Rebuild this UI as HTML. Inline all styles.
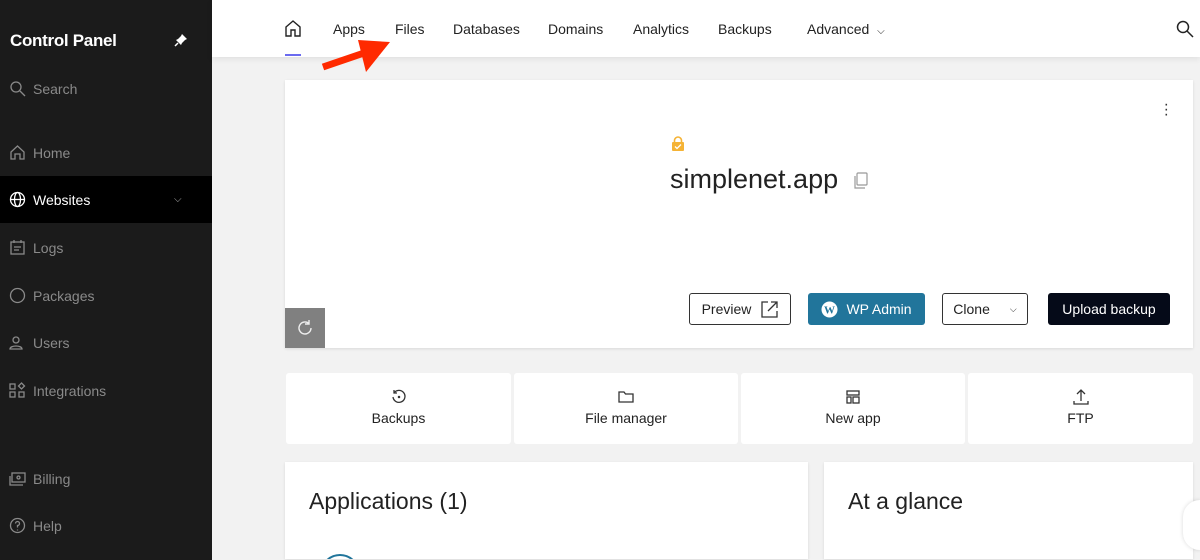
<!DOCTYPE html>
<html style="height:560px;overflow:hidden"><head><meta charset="utf-8"><style>
*{box-sizing:border-box;margin:0;padding:0}
body{width:1200px;height:560px;overflow:hidden;background:#f2f2f2;font-family:"Liberation Sans",sans-serif;position:relative}
.sb{position:absolute;left:0;top:0;width:212px;height:560px;background:#1b1b1b;color:#8a8a8a}
.sb .t{position:absolute;left:10px;top:31px;color:#fff;font-weight:bold;font-size:17px;letter-spacing:-0.3px}
.it{position:absolute;left:0;width:212px;height:47px;display:flex;align-items:center;padding-left:9px;font-size:14px}
.it svg{width:17px;height:17px;margin-right:7px;stroke:#8a8a8a;fill:none;stroke-width:1.3}
.it.on{background:#000;color:#fff}.it.on svg{stroke:#fff}
.top{position:absolute;left:212px;top:0;width:988px;height:57px;background:#fff;box-shadow:0 2px 6px rgba(0,0,0,.08)}
.nav{position:absolute;top:21px;font-size:14px;color:#222}
.card{position:absolute;background:#fff;box-shadow:0 1px 3px rgba(0,0,0,.1);overflow:hidden}
.btn{position:absolute;top:293px;height:32px;border-radius:3px;font-size:14px;display:flex;align-items:center;justify-content:center}
.tile{position:absolute;top:373px;height:71px;background:#fff;border-radius:3px;font-size:14px;color:#222;text-align:center}
.tile svg{display:block;margin:16px auto 5px;width:16px;height:16px;fill:none;stroke:#333;stroke-width:1.3}
</style></head><body>
<div class="sb">
<div class="t">Control Panel</div>
<svg style="position:absolute;left:174px;top:33px" width="14" height="14" viewBox="0 0 14 14"><path d="M8 1l5 5-2 1-3 3-1 2-5-5 2-1 3-3z" fill="#fff"/><path d="M4 10l-3 3" stroke="#fff" stroke-width="1.5"/></svg>
<div class="it" style="top:65px"><svg viewBox="0 0 17 17"><circle cx="7" cy="7" r="5"/><path d="M11 11l5 5"/></svg>Search</div>
<div class="it" style="top:129px"><svg viewBox="0 0 17 17"><path d="M2 8l6.5-6 6.5 6v7H11V10H6v5H2z"/></svg>Home</div>
<div class="it on" style="top:176px"><svg viewBox="0 0 17 17"><circle cx="8.5" cy="8.5" r="7"/><ellipse cx="8.5" cy="8.5" rx="3" ry="7"/><path d="M1.5 8.5h14"/></svg>Websites<span style="position:absolute;left:174px;font-size:10px;color:#aaa">⌵</span></div>
<div class="it" style="top:224px"><svg viewBox="0 0 17 17"><rect x="2" y="3" width="13" height="12"/><path d="M5 1v3M12 1v3M5 8h7M5 11h5"/></svg>Logs</div>
<div class="it" style="top:272px"><svg viewBox="0 0 17 17"><circle cx="8.5" cy="8.5" r="7"/></svg>Packages</div>
<div class="it" style="top:319px"><svg viewBox="0 0 17 17"><circle cx="7" cy="6" r="3"/><path d="M1 15c0-4 12-4 12 0z"/></svg>Users</div>
<div class="it" style="top:367px"><svg viewBox="0 0 17 17"><rect x="1" y="2" width="5" height="5"/><rect x="1" y="10" width="5" height="5"/><rect x="10" y="10" width="5" height="5"/><path d="M12.5 1l3 3-3 3-3-3z"/></svg>Integrations</div>
<div class="it" style="top:455px"><svg viewBox="0 0 17 17"><rect x="3" y="3" width="13" height="9"/><path d="M1 6v9h13"/><circle cx="9.5" cy="7.5" r="1.5"/></svg>Billing</div>
<div class="it" style="top:502px"><svg viewBox="0 0 17 17"><circle cx="8.5" cy="8.5" r="7"/><path d="M6.5 6.5a2 2 0 1 1 2 2v2M8.5 12.5v1"/></svg>Help</div>
</div>
<div class="top">
<svg style="position:absolute;left:73px;top:20px" width="16" height="17" viewBox="0 0 16 17" fill="none" stroke="#222" stroke-width="1.4"><path d="M1 7l7-6 7 6v9h-5v-6H6v6H1z"/></svg>
<div style="position:absolute;left:73px;top:54px;width:16px;height:2px;background:#6b6bf0"></div>
<span class="nav" style="left:121px">Apps</span><span class="nav" style="left:183px">Files</span><span class="nav" style="left:241px">Databases</span><span class="nav" style="left:336px">Domains</span><span class="nav" style="left:421px">Analytics</span><span class="nav" style="left:506px">Backups</span><span class="nav" style="left:595px">Advanced <span style="font-size:10px;margin-left:4px">⌵</span></span>
<svg style="position:absolute;left:964px;top:20px" width="18" height="18" viewBox="0 0 18 18" fill="none" stroke="#222" stroke-width="1.5"><circle cx="7" cy="7" r="5.5"/><path d="M11 11l6 6"/></svg>
</div>
<svg style="position:absolute;left:320px;top:36px" width="72" height="38" viewBox="0 0 72 38"><path d="M3 31L44 17" stroke="#ff2a00" stroke-width="7"/><path d="M38 4L70 6L46 36z" fill="#ff2a00"/></svg>
<div class="card" style="left:285px;top:80px;width:908px;height:268px">
<div style="position:absolute;right:24px;top:22px;font-size:16px;color:#333;line-height:5px">·<br>·<br>·</div>
<svg style="position:absolute;left:386px;top:56px" width="14" height="16" viewBox="0 0 14 16"><path d="M3.5 7V4.5a3.5 3.5 0 0 1 7 0V7" fill="none" stroke="#f5b335" stroke-width="1.6"/><rect x="1" y="6" width="12" height="9" rx="1" fill="#f5b335"/><path d="M4 10.5l2 2 4-4" stroke="#fff" stroke-width="1.3" fill="none"/></svg>
<div style="position:absolute;left:385px;top:84px;font-size:27px;color:#222">simplenet.app</div>
<svg style="position:absolute;left:568px;top:92px" width="16" height="18" viewBox="0 0 16 18" fill="none" stroke="#999" stroke-width="1.2"><rect x="4" y="1" width="10" height="12" rx="1"/><path d="M2 4v12h10"/></svg>
<div style="position:absolute;left:0;top:228px;width:40px;height:40px;background:#808080"><svg style="margin:11px" width="18" height="18" viewBox="0 0 18 18" fill="none" stroke="#eee" stroke-width="1.4"><path d="M15 9a6 6 0 1 1-2-4.5M13 1v4h-4"/></svg></div>
</div>
<div class="btn" style="left:689px;width:102px;border:1px solid #333;color:#222">Preview<svg style="margin-left:10px" width="17" height="17" viewBox="0 0 17 17" fill="none" stroke="#333" stroke-width="1.3"><path d="M7 1H1v15h15v-6M10 1h6v6M16 1L7 10"/></svg></div>
<div class="btn" style="left:808px;width:117px;background:#21759b;color:#fff"><svg style="margin-right:8px" width="17" height="17" viewBox="0 0 17 17"><circle cx="8.5" cy="8.5" r="8" fill="#fff"/><text x="8.5" y="12.5" font-size="11" font-weight="bold" fill="#21759b" text-anchor="middle" font-family="Liberation Serif">W</text></svg>WP Admin</div>
<div class="btn" style="left:942px;width:86px;border:1px solid #333;color:#222">Clone<span style="margin-left:20px;font-size:9px">⌵</span></div>
<div class="btn" style="left:1048px;width:122px;background:#050a18;color:#fff">Upload backup</div>
<div class="tile" style="left:286px;width:225px"><svg viewBox="0 0 16 16"><path d="M3 4a6 6 0 1 1-1 4M3 1v3h3"/><circle cx="8" cy="8" r=".6" fill="#333"/></svg>Backups</div>
<div class="tile" style="left:514px;width:224px"><svg viewBox="0 0 16 16"><path d="M1 3h5l1.5 2H15v8H1z"/></svg>File manager</div>
<div class="tile" style="left:741px;width:224px"><svg viewBox="0 0 16 16"><rect x="2" y="2" width="12" height="4"/><rect x="2" y="8" width="4" height="6"/><rect x="8" y="8" width="6" height="6"/></svg>New app</div>
<div class="tile" style="left:968px;width:225px"><svg viewBox="0 0 16 16"><path d="M8 12V1M4 5l4-4 4 4M1 12v3h14v-3"/></svg>FTP</div>
<div class="card" style="left:285px;top:462px;width:523px;height:97px"><div style="position:absolute;left:24px;top:26px;font-size:23px;color:#222">Applications (1)</div>
<svg style="position:absolute;left:34px;top:91px" width="42" height="6" viewBox="0 0 42 6"><circle cx="21" cy="21" r="19" fill="none" stroke="#21759b" stroke-width="2"/></svg></div>
<div class="card" style="left:824px;top:462px;width:369px;height:97px"><div style="position:absolute;left:24px;top:26px;font-size:23px;color:#222">At a glance</div></div>
<div style="position:absolute;left:1183px;top:500px;width:17px;height:50px;border-radius:20px 0 0 20px;background:#fff;box-shadow:0 0 4px rgba(0,0,0,.15)"></div>
</body></html>
